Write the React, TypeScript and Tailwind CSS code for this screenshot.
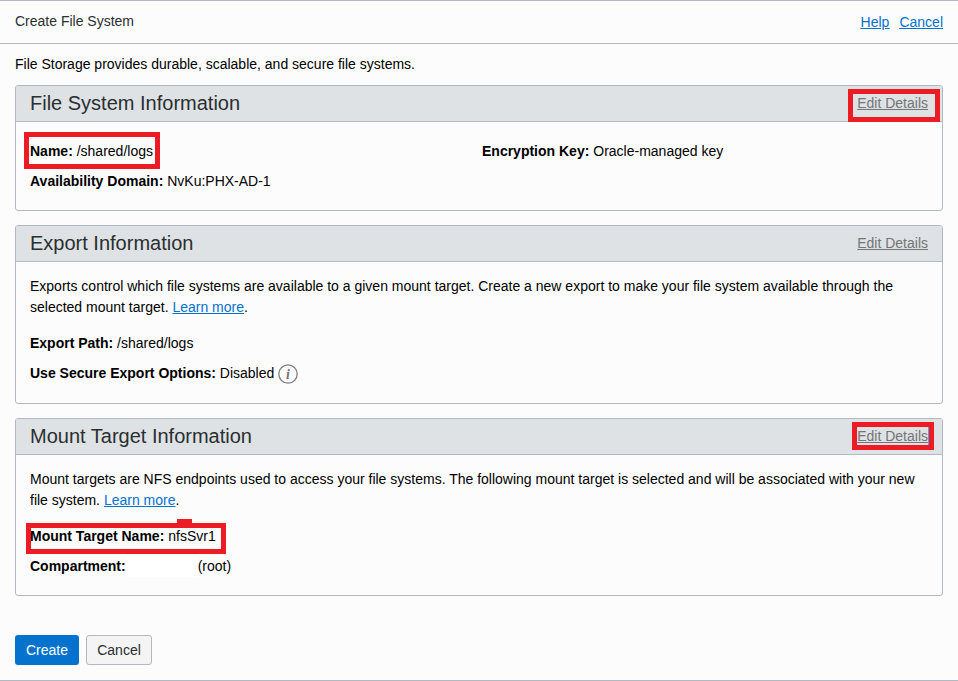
import type { ReactNode } from "react";

function Panel({ title, height, children }: { title: string; height: string; children: ReactNode }) {
  return (
    <section className={`relative flex flex-col rounded-[3px] border border-[#b3b9c3] ${height}`}>
      <header className="box-content flex h-[35px] shrink-0 items-center justify-between rounded-t-[2px] border-b border-[#b3b9c3] bg-[#dee2e5] px-3.5">
        <h2 className="pb-px text-[20px] leading-[34px] text-[#2a2f2f]">{title}</h2>
        <a className="pb-px leading-5 text-[#757575] underline">Edit Details</a>
      </header>
      <div className="px-3.5">{children}</div>
    </section>
  );
}

function Field({ label, children }: { label: string; children: ReactNode }) {
  return (
    <div className="flex h-[30px] items-center whitespace-pre">
      <b className="font-bold">{label}</b> {children}
    </div>
  );
}

function LearnMore() {
  return <a className="text-[#0572ce] underline">Learn more</a>;
}

function Mark({ place }: { place: string }) {
  return <div className={`pointer-events-none absolute border-[5px] border-[#ed1c24] ${place}`} />;
}

export default function App() {
  return (
    <div className="flex h-[681px] w-[958px] flex-col overflow-hidden border-y border-[#b3b9c3] bg-[#fcfcfc] font-['Liberation_Sans',Arial,sans-serif] text-[14px] leading-[21px] text-black">
      <header className="flex h-[43px] shrink-0 items-center justify-between border-b border-[#b3b9c3] px-[15px]">
        <h1 className="pb-0.5 text-[#2a2f2f]">Create File System</h1>
        <nav className="flex gap-2.5 text-[#0572ce] underline">
          <a>Help</a>
          <a>Cancel</a>
        </nav>
      </header>
      <main className="flex flex-col px-[15px] pt-[10px]">
        <p className="mb-2.5">File Storage provides durable, scalable, and secure file systems.</p>
        <div className="flex flex-col gap-3.5">
          <Panel title="File System Information" height="h-[126px]">
            <div className="grid grid-cols-[452px_1fr] pt-3.5">
              <Field label="Name:"> /shared/logs</Field>
              <Field label="Encryption Key:"> Oracle-managed key</Field>
              <Field label="Availability Domain:"> NvKu:PHX-AD-1</Field>
            </div>
            <Mark place="left-[8px] top-[46px] h-[37px] w-[136px]" />
            <Mark place="left-[832px] top-[3px] h-[33px] w-[92px]" />
          </Panel>
          <Panel title="Export Information" height="h-[179px]">
            <p className="pt-3.5">
              Exports control which file systems are available to a given mount target. Create a new export to make your file system available through the selected mount target. <LearnMore />.
            </p>
            <div className="pt-2.5">
              <Field label="Export Path:"> /shared/logs</Field>
              <Field label="Use Secure Export Options:">
                {" Disabled"}
                <svg className="ml-1 mt-px" width="20" height="20" viewBox="0 0 20 20">
                  <circle cx="10" cy="10" r="9.2" fill="none" stroke="#808080" strokeWidth="1.3" />
                  <text x="10" y="14.5" textAnchor="middle" fontFamily="Liberation Serif" fontStyle="italic" fontWeight="bold" fontSize="14" fill="#757575">i</text>
                </svg>
              </Field>
            </div>
          </Panel>
          <Panel title="Mount Target Information" height="h-[178px]">
            <p className="pt-3.5">
              Mount targets are NFS endpoints used to access your file systems. The following mount target is selected and will be associated with your new file system. <LearnMore />.
            </p>
            <div className="pt-2.5">
              <Field label="Mount Target Name:"> nfsSvr1</Field>
              <Field label="Compartment:">
                <span className="mt-px h-5 w-[72px] bg-white" />
                (root)
              </Field>
            </div>
            <Mark place="left-[10px] top-[104px] h-[31px] w-[200px]" />
            <div className="absolute left-[161px] top-[100px] h-1 w-[15px] bg-[#ed1c24]" />
            <Mark place="left-[836px] top-[3px] h-[28px] w-[82px]" />
            <div className="absolute left-[912px] top-[8px] h-[18px] w-px bg-[#5b9be0]" />
          </Panel>
        </div>
        <div className="mt-[39px] flex gap-[7px]">
          <button className="h-[30px] w-16 rounded-[3px] bg-[#0572ce] text-white">Create</button>
          <button className="h-[30px] w-[66px] rounded-[3px] border border-[#b3b9c3] bg-[#f4f4f4] text-[#2a2f2f]">Cancel</button>
        </div>
      </main>
    </div>
  );
}
